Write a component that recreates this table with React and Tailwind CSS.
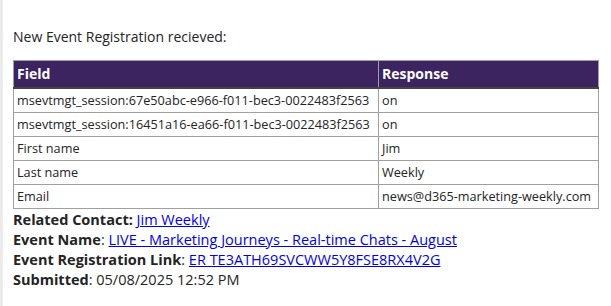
const rows = [
  ["msevtmgt_session:67e50abc-e966-f011-bec3-0022483f2563", "on"],
  ["msevtmgt_session:16451a16-ea66-f011-bec3-0022483f2563", "on"],
  ["First name", "Jim"],
  ["Last name", "Weekly"],
  ["Email", "news@d365-marketing-weekly.com"],
];

const App = () => {
  return (
    <div
      className="min-h-[306px] w-[611px] bg-white border-l-[3px] border-[#ebebeb] pl-[10px] pt-[27px] text-[#242424]"
      style={{ fontFamily: '"Open Sans", "Noto Sans", sans-serif' }}
    >
      <p className="text-[14px] leading-[20px] mb-[13px]">New Event Registration recieved:</p>

      <table className="border-collapse w-[586px] text-[12.7px]">
        <thead>
          <tr className="bg-[#3c2460] text-white">
            <th className="w-[365px] text-left font-bold text-[14px] leading-[26px] px-[3px] border border-[#a0a0a0] border-b-[2px] border-b-[#444444]">
              Field
            </th>
            <th className="text-left font-bold text-[14px] leading-[26px] px-[3px] border border-[#a0a0a0] border-l-[#cfe0ef] border-b-[2px] border-b-[#444444]">
              Response
            </th>
          </tr>
        </thead>
        <tbody>
          {rows.map(([f, r]) => (
            <tr key={f}>
              <td className="border border-[#a0a0a0] px-[3px] h-[24px] leading-[22px] whitespace-nowrap">{f}</td>
              <td className="border border-[#a0a0a0] px-[3px] h-[24px] leading-[22px] whitespace-nowrap">{r}</td>
            </tr>
          ))}
        </tbody>
      </table>

      <div className="text-[14.5px] leading-[20px] mt-[1px]">
        <p>
          <b>Related Contact:</b> <a href="#" className="text-[#0000ee] underline">Jim Weekly</a>
        </p>
        <p>
          <b>Event Name</b>:{" "}
          <a href="#" className="text-[#0000ee] underline">LIVE - Marketing Journeys - Real-time Chats - August</a>
        </p>
        <p>
          <b>Event Registration Link</b>:{" "}
          <a href="#" className="text-[#0000ee] underline">ER TE3ATH69SVCWW5Y8FSE8RX4V2G</a>
        </p>
        <p>
          <b>Submitted</b>: 05/08/2025 12:52 PM
        </p>
      </div>
    </div>
  );
};

export default App;
